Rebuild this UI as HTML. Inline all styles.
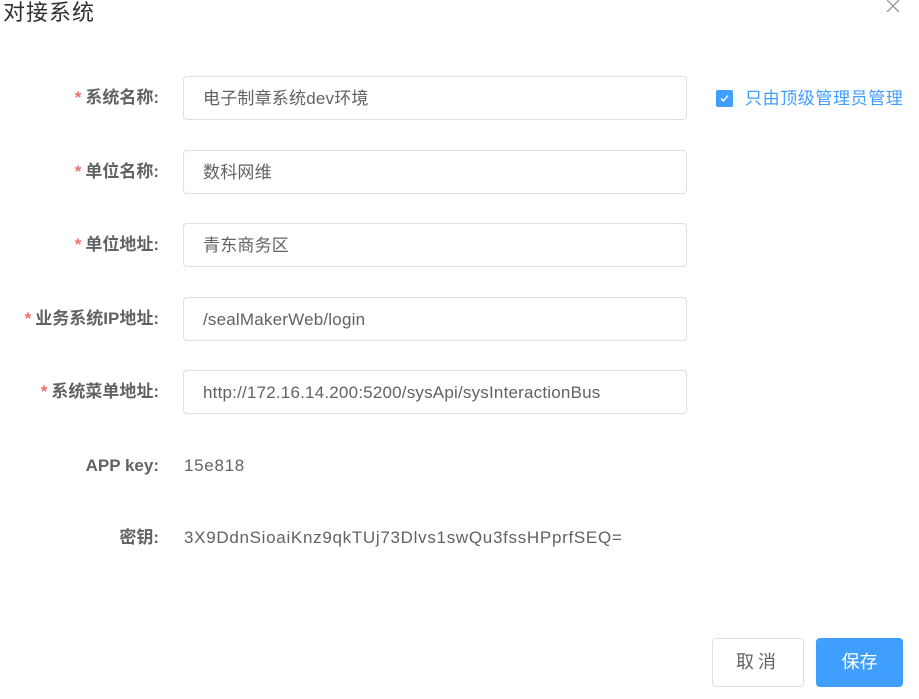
<!DOCTYPE html>
<html><head><meta charset="utf-8"><style>
body{margin:0;width:919px;height:699px;background:#fff;position:relative;overflow:hidden;font-family:"Liberation Sans","Noto Sans CJK SC",sans-serif;}
.a{position:absolute;}
.t{left:3px;top:0px;font-size:22px;color:#303133;line-height:26px;letter-spacing:1px;}
.lbl{right:760px;font-size:17px;font-weight:bold;color:#606266;line-height:44px;white-space:nowrap;text-align:right;}
.lbl i{color:#f56c6c;font-style:normal;margin-right:4px;}
.in{left:183px;height:42px;border:1px solid #dcdfe6;border-radius:4px;font-size:17px;letter-spacing:0.2px;color:#606266;line-height:44px;padding-left:19px;width:483px;}
.v{left:184px;font-size:17px;letter-spacing:0.7px;color:#606266;line-height:44px;}
.btn{height:47px;border-radius:4px;font-size:18px;line-height:47px;text-align:center;}
</style></head><body>
<div class="a t">对接系统</div>
<svg class="a" style="left:886px;top:0px" width="14" height="12"><path d="M1 0L13 12M13 0L1 12" stroke="#909399" stroke-width="1.3"/></svg>

<div class="a lbl" style="top:76px"><i>*</i>系统名称:</div>
<div class="a in" style="top:76px">电子制章系统dev环境</div>
<div class="a" style="left:716px;top:90px;width:17px;height:17px;background:#409eff;border-radius:2px"><svg width="17" height="17"><path d="M5 8.5L7.5 11L12 5.5" stroke="#fff" stroke-width="1.4" fill="none"/></svg></div>
<div class="a" style="left:745px;top:87px;font-size:17px;letter-spacing:0.6px;color:#409eff;line-height:24px">只由顶级管理员管理</div>

<div class="a lbl" style="top:150px"><i>*</i>单位名称:</div>
<div class="a in" style="top:150px">数科网维</div>
<div class="a lbl" style="top:223px"><i>*</i>单位地址:</div>
<div class="a in" style="top:223px">青东商务区</div>
<div class="a lbl" style="top:297px"><i>*</i>业务系统IP地址:</div>
<div class="a in" style="top:297px">/sealMakerWeb/login</div>
<div class="a lbl" style="top:370px"><i>*</i>系统菜单地址:</div>
<div class="a in" style="top:370px">http://172.16.14.200:5200/sysApi/sysInteractionBus</div>

<div class="a lbl" style="top:444px">APP key:</div>
<div class="a v" style="top:444px">15e818</div>
<div class="a lbl" style="top:516px">密钥:</div>
<div class="a v" style="top:516px">3X9DdnSioaiKnz9qkTUj73Dlvs1swQu3fssHPprfSEQ=</div>

<div class="a btn" style="left:712px;top:638px;width:90px;border:1px solid #dcdfe6;color:#606266;height:47px;letter-spacing:4px">取消</div>
<div class="a btn" style="left:816px;top:638px;width:87px;height:49px;line-height:49px;background:#409eff;color:#fff">保存</div>
</body></html>
